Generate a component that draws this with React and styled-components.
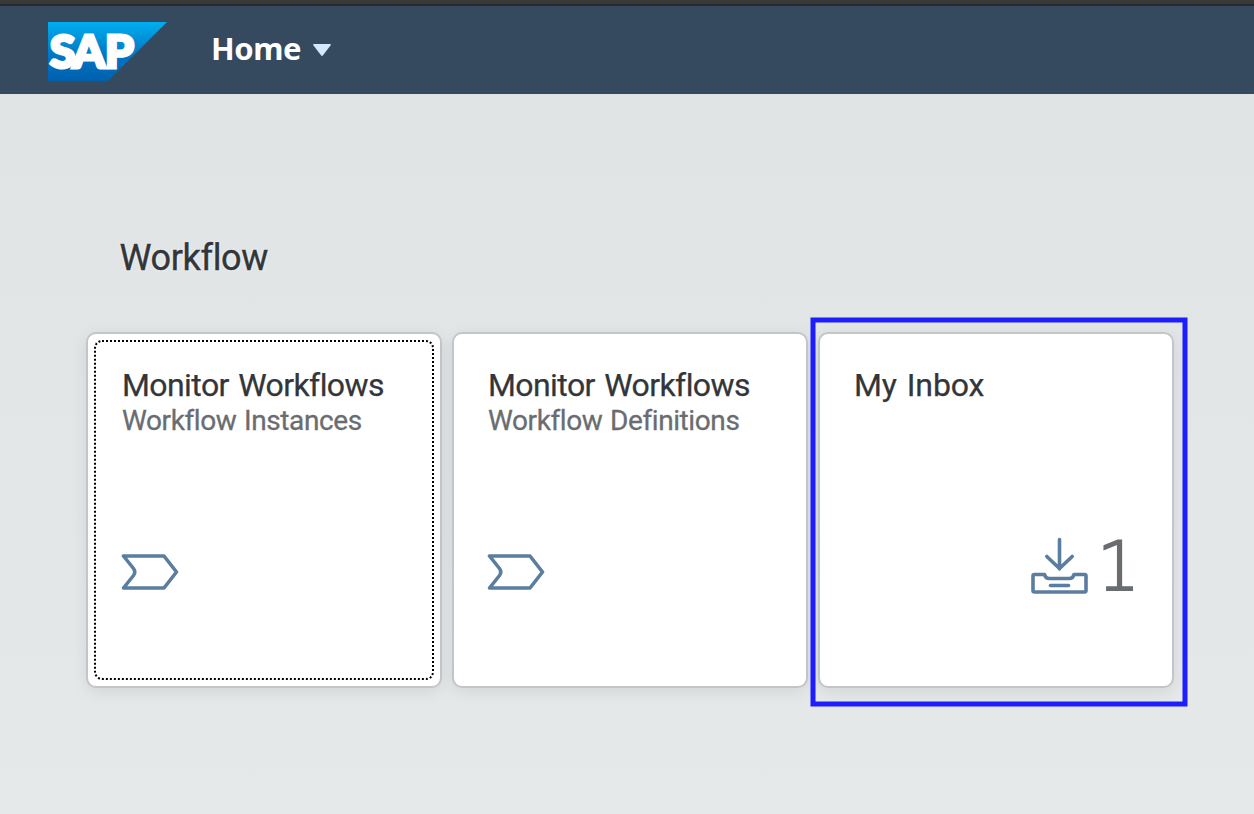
import React from "react";
import styled, { createGlobalStyle } from "styled-components";

const GlobalStyle = createGlobalStyle`
  * { box-sizing: border-box; }
  body { margin: 0; font-family: Roboto, "Noto Sans", sans-serif; }
  h1, h2, h3, p { margin: 0; font-weight: 400; }
`;

const Page = styled.div`
  height: 814px;
  display: flex;
  flex-direction: column;
  background: linear-gradient(to bottom, #dfe3e4, #e5e9ea);
  overflow: hidden;
`;

const WindowEdge = styled.div`
  height: 6px;
  flex: none;
  background: #38393b;
  border-bottom: 2px solid #2a2a2a;
`;

const ShellBar = styled.header`
  height: 88px;
  flex: none;
  display: flex;
  align-items: center;
  gap: 44px;
  padding: 0 48px;
  background: #354a5f;
`;

const Logo = styled.svg`
  display: block;
  width: 119px;
  height: 59px;
  margin-top: 2px;
`;

const HomeButton = styled.button`
  display: flex;
  align-items: center;
  gap: 12px;
  padding: 0;
  border: 0;
  background: none;
  color: #fff;
  font: 700 31px/44px "Noto Sans", sans-serif;
  letter-spacing: -0.4px;
  margin-top: -5px;

  svg { margin-top: 5px; }
`;

const Content = styled.main`
  padding: 139px 86px 0;
`;

const GroupTitle = styled.h2`
  padding-left: 33.5px;
  color: #32363a;
  font: 400 36px/50px Roboto, sans-serif;
  letter-spacing: -0.35px;
  -webkit-text-stroke: 0.4px #32363a;
  text-shadow: 0 0 3px #fff;
`;

const Tiles = styled.div`
  display: flex;
  gap: 10px;
  margin-top: 49px;
`;

const Tile = styled.article`
  position: relative;
  flex: none;
  width: 356px;
  height: 356px;
  padding: 32px 34px;
  border: 2px solid #c3c6c8;
  border-radius: 10px;
  background: #fff;
  box-shadow: 0 4px 16px rgba(0, 0, 0, 0.08);
  display: flex;
  flex-direction: column;
`;

const FocusRing = styled.span`
  position: absolute;
  inset: 6px;
  border: 2px dotted #000;
  border-radius: 8px;
`;

const Marker = styled.svg`
  position: absolute;
  left: -10px;
  top: -17px;
`;

const TileTitle = styled.h3`
  color: #32363a;
  font: 400 32px/38px Roboto, sans-serif;
  letter-spacing: ${(p) => p.$tracking}px;
  word-spacing: 2px;
  -webkit-text-stroke: 0.25px #32363a;
  white-space: nowrap;
`;

const TileSubtitle = styled.p`
  color: #6a6d70;
  font: 400 28px/34px Roboto, sans-serif;
  letter-spacing: -0.4px;
  word-spacing: 1px;
  -webkit-text-stroke: 0.3px #6a6d70;
  white-space: nowrap;
`;

const TileFooter = styled.div`
  margin-top: auto;
  height: 84px;
  margin-bottom: 40px;
  display: flex;
  align-items: center;
  justify-content: ${(p) => (p.$end ? "flex-end" : "flex-start")};
`;

const Glyph = styled.svg`
  display: block;
  flex: none;
  fill: none;
  stroke: #5a7da0;
  stroke-width: 3.6;
  stroke-linecap: round;
  stroke-linejoin: round;
`;

const ProcessGlyph = styled(Glyph)`
  margin: -1px 0 0 -1px;
`;

const InboxGlyph = styled(Glyph)`
  margin: -12px 8.5px 0 0;
`;

const Count = styled.span`
  width: 41px;
  margin-top: -11px;
  color: #6a6d70;
  font: 200 67.5px/84px "DejaVu Sans", sans-serif;
  -webkit-text-stroke: 1.9px #6a6d70;
`;

function SapLogo() {
  return (
    <Logo viewBox="0 0 119 59" aria-label="SAP">
      <defs>
        <linearGradient id="sap" x1="0" y1="0" x2="0" y2="1">
          <stop offset="0" stopColor="#00aeef" />
          <stop offset="0.25" stopColor="#0095db" />
          <stop offset="0.6" stopColor="#0074c2" />
          <stop offset="1" stopColor="#0060ae" />
        </linearGradient>
      </defs>
      <path d="M0 0H119L60 59H0Z" fill="url(#sap)" />
      <text y="46.1" x="1.8 24.5 56.7" fontFamily="Lato, sans-serif" fontWeight="900" fontSize="46.5" fill="#fff" stroke="#fff" strokeWidth="3">SAP</text>
    </Logo>
  );
}

function ProcessIcon() {
  return (
    <ProcessGlyph width="58" height="36" viewBox="0 0 58 36">
      <path d="M2.500 2H43L55.500 18L43 34H2.500L12.500 21.500Q15 18 12.500 14.500Z" />
    </ProcessGlyph>
  );
}

function InboxIcon() {
  return (
    <InboxGlyph width="58" height="58" viewBox="0 0 58 58">
      <path d="M28.500 2.500V32M15.800 19.500L28.500 31.500L41.200 19.500" />
      <path d="M13.500 37.500H3.500Q2 37.500 2 39V53.500Q2 55 3.500 55H53.500Q55 55 55 53.500V39Q55 37.500 53.500 37.500H43Q42 41.500 38.500 41.500H18Q14.500 41.500 13.500 37.500" />
      <path d="M19.500 48.500H37.500" />
    </InboxGlyph>
  );
}

function AppTile({ title, subtitle, tracking = -0.58, focused, marked, children, end }) {
  return (
    <Tile>
      {focused && <FocusRing />}
      <TileTitle $tracking={tracking}>{title}</TileTitle>
      {subtitle && <TileSubtitle>{subtitle}</TileSubtitle>}
      <TileFooter $end={end}>{children}</TileFooter>
      {marked && (
        <Marker width="378" height="390">
          <rect x="3" y="3" width="372" height="384" fill="none" stroke="#1d1dff" strokeWidth="5" />
        </Marker>
      )}
    </Tile>
  );
}

export default function App() {
  return (
    <Page>
      <GlobalStyle />
      <WindowEdge />
      <ShellBar>
        <SapLogo />
        <HomeButton>
          Home
          <svg width="18" height="12" viewBox="0 0 18 12">
            <path d="M1 0H17Q18.500 0 17.500 1.500L10 11.300Q9 12.500 8 11.300L0.500 1.500Q-0.500 0 1 0Z" fill="#d1e8ff" />
          </svg>
        </HomeButton>
      </ShellBar>
      <Content>
        <GroupTitle>Workflow</GroupTitle>
        <Tiles>
          <AppTile title="Monitor Workflows" subtitle="Workflow Instances" focused>
            <ProcessIcon />
          </AppTile>
          <AppTile title="Monitor Workflows" subtitle="Workflow Definitions">
            <ProcessIcon />
          </AppTile>
          <AppTile title="My Inbox" tracking={-0.1} marked end>
            <InboxIcon />
            <Count>1</Count>
          </AppTile>
        </Tiles>
      </Content>
    </Page>
  );
}
